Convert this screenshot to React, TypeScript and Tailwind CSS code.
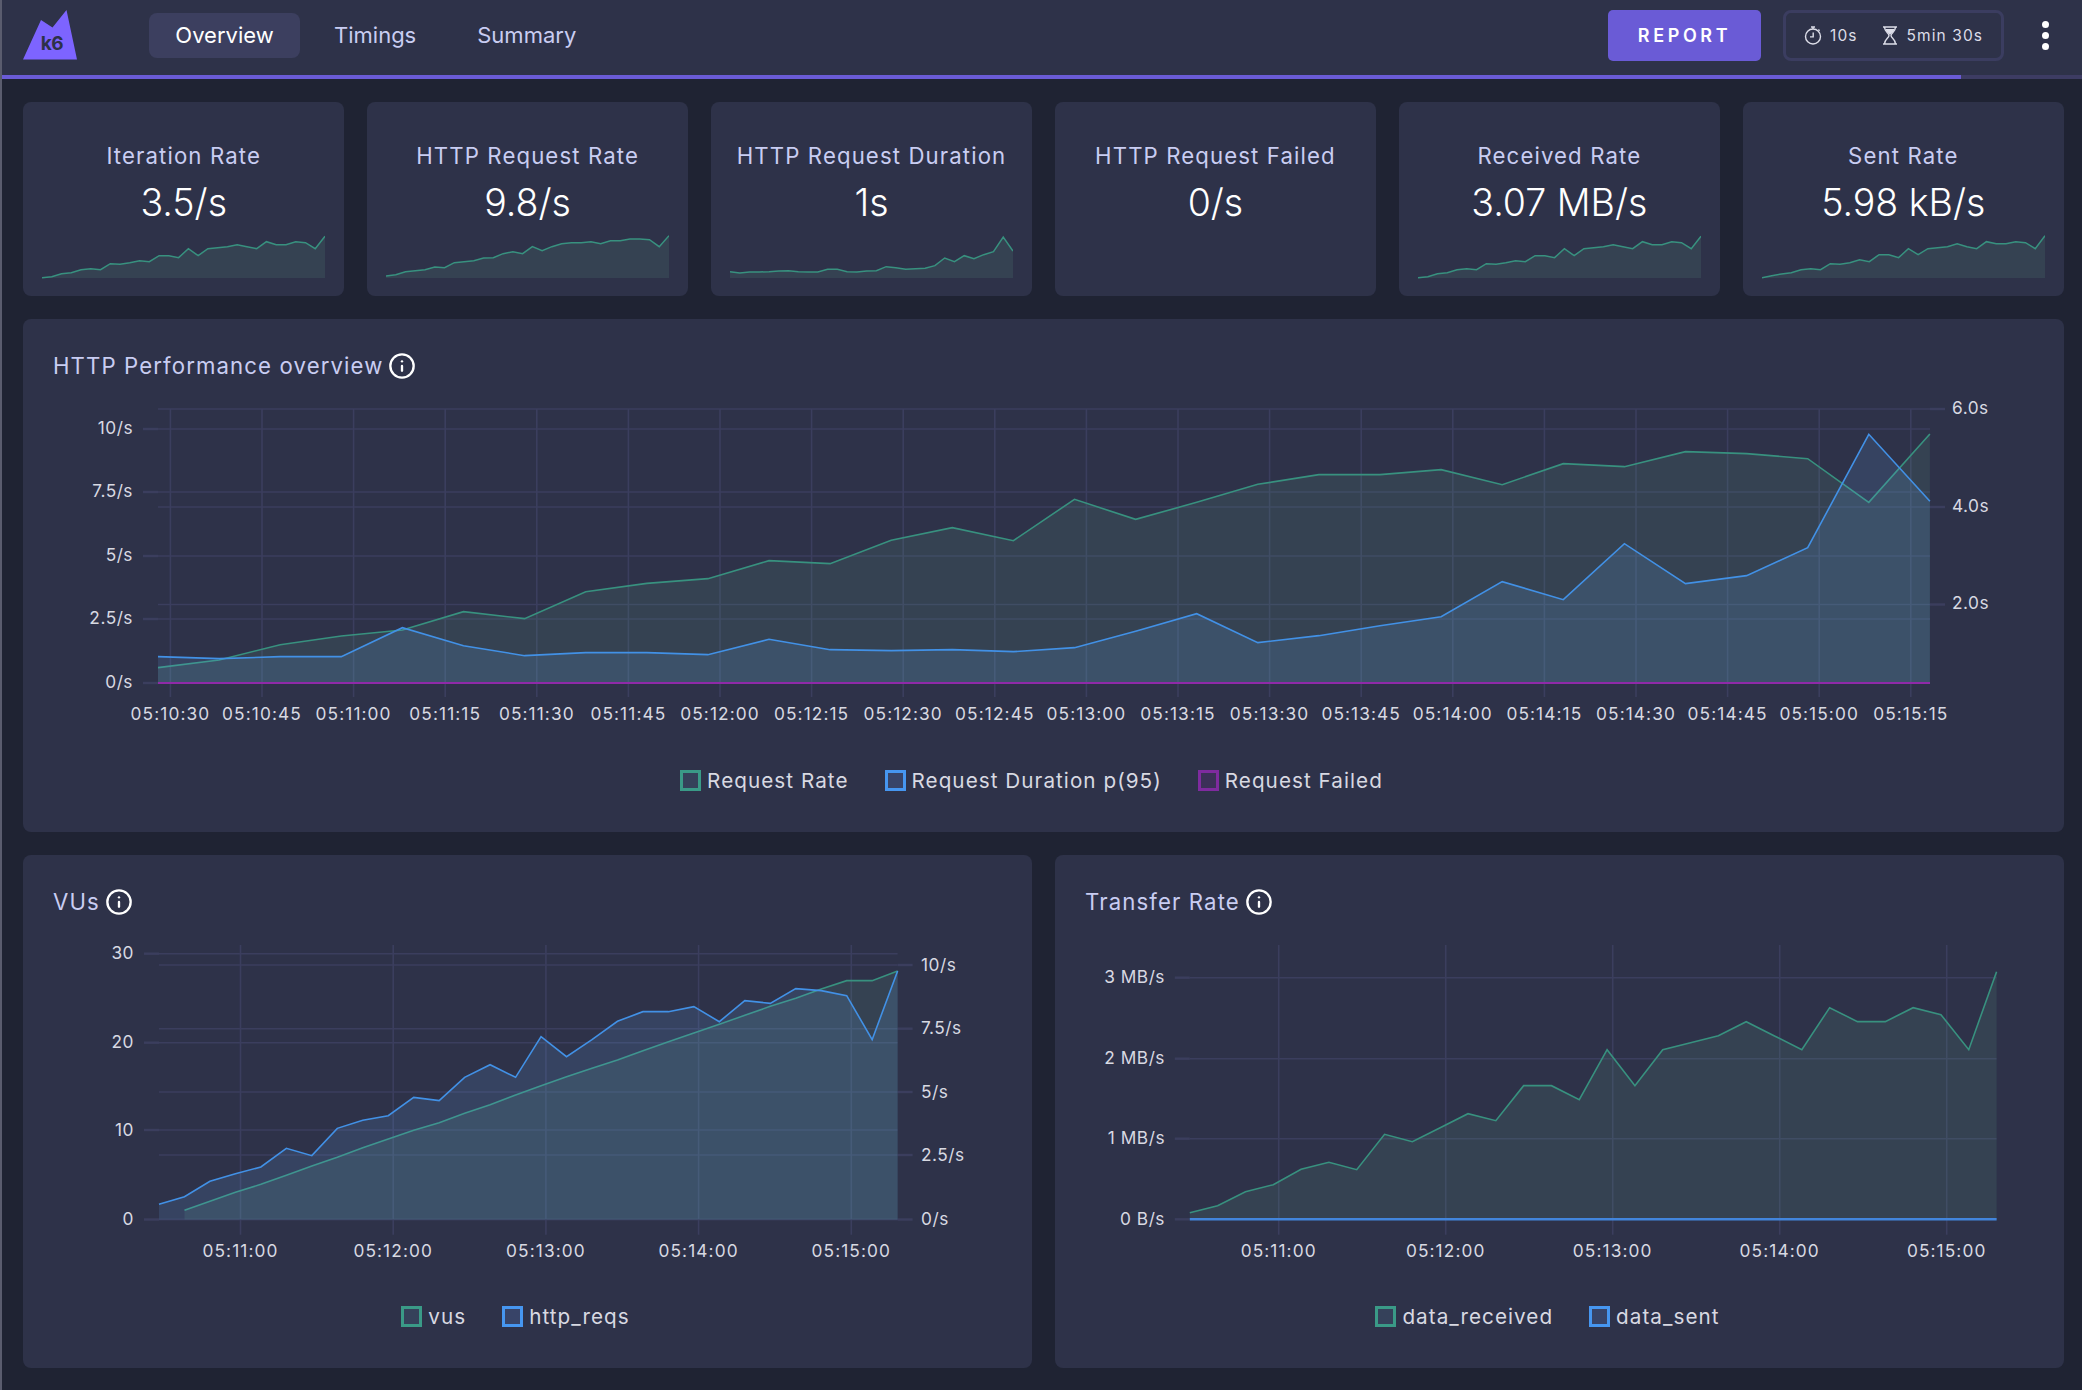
import { Info } from "lucide-react";
import type { ReactNode } from "react";

const GREEN = "#38917f";
const GREEN_FILL = "#68af94";
const BLUE = "#4291e6";
const BLUE_FILL = "#6ab2f9";
const PURPLE = "#8f2aa8";
const GRID = "#3b3e5e";
const LABEL = "#d8d9e2";

const sparkA = [830, 827, 818, 815, 806, 803, 806, 788, 790, 785, 779, 782, 764, 764, 770, 743, 764, 743, 740, 737, 731, 737, 743, 722, 731, 731, 722, 725, 743, 706];
const sparkB = [825, 821, 812, 809, 806, 798, 800, 785, 782, 779, 771, 770, 758, 752, 758, 737, 749, 737, 728, 725, 725, 722, 728, 719, 719, 714, 714, 716, 737, 704];
const sparkC = [812, 816, 813, 813, 812, 810, 809, 812, 813, 813, 805, 805, 812, 813, 810, 809, 797, 800, 805, 803, 802, 794, 771, 782, 764, 773, 761, 752, 708, 750];
const sparkD = [830, 824, 819, 815, 806, 803, 806, 788, 790, 785, 776, 782, 761, 761, 770, 743, 761, 743, 740, 737, 728, 737, 743, 722, 728, 728, 722, 725, 743, 704];

const stats = [
  { title: "Iteration Rate", value: "3.5/s", spark: sparkA },
  { title: "HTTP Request Rate", value: "9.8/s", spark: sparkB },
  { title: "HTTP Request Duration", value: "1s", spark: sparkC },
  { title: "HTTP Request Failed", value: "0/s", spark: null },
  { title: "Received Rate", value: "3.07 MB/s", spark: sparkA },
  { title: "Sent Rate", value: "5.98 kB/s", spark: sparkD },
];

// sample heights measured at 3x, so y = top + v / 3
const perfRate = [803, 780, 734, 708, 690, 635, 656, 575, 550, 536, 482, 491, 421, 383, 422, 298, 358, 307, 253, 224, 224, 209, 254, 191, 200, 155, 161, 176, 307, 102];
const perfDuration = [770, 776, 770, 770, 683, 737, 767, 758, 758, 764, 718, 749, 752, 749, 755, 743, 694, 641, 728, 707, 677, 650, 545, 599, 431, 551, 527, 443, 103, 304];
const vus = [811, 784, 757, 733, 706, 678, 652, 623, 597, 571, 548, 520, 494, 465, 437, 410, 385, 360, 332, 305, 279, 253, 226, 199, 175, 147, 122, 122, 93];
const httpReqs = [793, 770, 724, 701, 681, 625, 647, 565, 541, 527, 472, 482, 412, 374, 412, 290, 350, 299, 244, 215, 215, 200, 245, 182, 190, 146, 152, 167, 299, 93];
const received = [818, 797, 755, 734, 688, 667, 689, 583, 605, 563, 521, 542, 437, 437, 479, 329, 437, 329, 308, 287, 245, 287, 329, 203, 245, 245, 203, 224, 329, 95];

const perfTimes = ["05:10:30", "05:10:45", "05:11:00", "05:11:15", "05:11:30", "05:11:45", "05:12:00", "05:12:15", "05:12:30", "05:12:45", "05:13:00", "05:13:15", "05:13:30", "05:13:45", "05:14:00", "05:14:15", "05:14:30", "05:14:45", "05:15:00", "05:15:15"];
const minuteTimes = ["05:11:00", "05:12:00", "05:13:00", "05:14:00", "05:15:00"];

type AxisLabel = { y: number; text: string };
type Series = { ys: number[]; color: string; fill: string; startX: number; fillOpacity: number; width?: number };

type ChartProps = {
  left: number;
  top: number;
  width: number;
  plotLeft: number;
  plotRight: number;
  baseY: number;
  gridTop: number;
  gridBottom: number;
  leftLabelX: number;
  rightLabelX?: number;
  labelDy?: number;
  leftAxis: AxisLabel[];
  rightAxis?: AxisLabel[];
  xTicks: { x: number; text: string }[];
  labelY: number;
  cropTop: number;
  step: number;
  series: Series[];
  flatLines?: { color: string; width: number }[];
};

function Chart(props: ChartProps) {
  const { left, top, width, plotLeft, plotRight, baseY, gridTop, gridBottom, leftAxis, rightAxis = [], xTicks, series, step, cropTop, labelDy = -1 } = props;
  const hLine = (y: number) => <line key={"h" + y} x1={plotLeft} x2={plotRight} y1={y} y2={y} stroke={GRID} strokeWidth={1.6} />;

  return (
    <svg className="block h-[340px] w-full" viewBox={`${left} ${top} ${width} 340`}>
      {leftAxis.map((a) => hLine(a.y))}
      {rightAxis.map((a) => hLine(a.y))}
      {xTicks.map((t) => (
        <line key={t.text} x1={t.x} x2={t.x} y1={gridTop} y2={gridBottom} stroke={GRID} strokeWidth={1.6} />
      ))}
      {leftAxis.map((a) => (
        <line key={a.text} x1={plotLeft - 15} x2={plotLeft} y1={a.y} y2={a.y} stroke={GRID} strokeWidth={2.4} />
      ))}
      {rightAxis.map((a) => (
        <line key={a.text} x1={plotRight} x2={plotRight + 15} y1={a.y} y2={a.y} stroke={GRID} strokeWidth={2.4} />
      ))}
      {series.map((s) => {
        const pts = s.ys.map((v, i) => `${s.startX + i * step},${cropTop + v / 3}`);
        const lastX = s.startX + (s.ys.length - 1) * step;
        return (
          <g key={s.color}>
            <polygon points={`${s.startX},${baseY} ${pts.join(" ")} ${lastX},${baseY}`} fill={s.fill} fillOpacity={s.fillOpacity} />
            <polyline points={pts.join(" ")} fill="none" stroke={s.color} strokeWidth={s.width ?? 1.6} />
          </g>
        );
      })}
      {props.flatLines?.map((l) => (
        <line key={l.color} x1={plotLeft} x2={plotRight} y1={baseY} y2={baseY} stroke={l.color} strokeWidth={l.width} />
      ))}
      <g fill={LABEL} fontSize={17.3} letterSpacing={0.5} dominantBaseline="central">
        {leftAxis.map((a) => (
          <text key={a.text} x={props.leftLabelX} y={a.y + labelDy} textAnchor="end">
            {a.text}
          </text>
        ))}
        {rightAxis.map((a) => (
          <text key={a.text} x={props.rightLabelX} y={a.y + labelDy}>
            {a.text}
          </text>
        ))}
        {xTicks.map((t) => (
          <text key={t.text} x={t.x} y={props.labelY} textAnchor="middle" letterSpacing={1.1}>
            {t.text}
          </text>
        ))}
      </g>
    </svg>
  );
}

function Logo() {
  return (
    <svg width="54" height="50" viewBox="0 0 54 50" className="mt-[10px] shrink-0 self-start">
      <path d="M0 49.5 18 10l11.5 7.5L43.500 0 54 49.5Z" fill="#7d64ff" />
      <text x="29" y="40" textAnchor="middle" fontSize="19" fontWeight="700" fill="#2d3148" letterSpacing="-0.5">
        k6
      </text>
    </svg>
  );
}

function Header() {
  return (
    <header className="relative flex h-[79px] items-center bg-[#2e3249] pb-[8px] pl-[21px] pr-[33px]">
      <Logo />
      <nav className="ml-[72px] flex gap-[7px] text-[22px] text-[#c9cdf2]">
        <div className="flex h-[45px] w-[151px] items-center justify-center rounded-lg bg-[#3c3f5f] text-white">Overview</div>
        <div className="flex h-[45px] items-center px-[27px]">Timings</div>
        <div className="flex h-[45px] items-center px-[27px]">Summary</div>
      </nav>
      <button className="ml-auto flex h-[51px] w-[153px] items-center justify-center rounded-[5px] bg-[#6a5bd6] text-[18px] font-semibold tracking-[0.2em] text-white">
        REPORT
      </button>
      <div className="ml-[22px] flex h-[51px] w-[221px] items-center rounded-lg border-[3px] border-[#3b3d60] pl-[18px] text-[15.5px] tracking-[0.07em] text-[#dcdde8]">
        <svg width="18" height="19" viewBox="0 0 18 19" fill="none" stroke="#dcdde8" strokeWidth="1.4" className="shrink-0">
          <circle cx="9" cy="10.5" r="7.5" />
          <path d="M9 1.2v1.800M7 1h4M14.400 3.600l1.200 1.200M9.200 6.500v4.400H6" />
        </svg>
        <span className="ml-[8px]">10s</span>
        <svg width="16" height="19" viewBox="0 0 16 19" fill="none" stroke="#dcdde8" strokeWidth="1.4" className="ml-[24px] shrink-0">
          <path d="M1 1h14M1 18h14M2.500 1c0 5 4.500 6 4.500 8.500S2.500 13 2.500 18M13.500 1c0 5-4.500 6-4.500 8.500s4.500 3.500 4.500 8.500" />
          <path d="M3.500 3h9c-.5 3-3.500 4-4.500 6-1-2-4-3-4.500-6Z" fill="#dcdde8" stroke="none" />
        </svg>
        <span className="ml-[9px]">5min 30s</span>
      </div>
      <div className="ml-[38px] flex flex-col gap-[4px]">
        <span className="size-[7px] rounded-full bg-white" />
        <span className="size-[7px] rounded-full bg-white" />
        <span className="size-[7px] rounded-full bg-white" />
      </div>
      <div className="absolute bottom-0 left-0 h-[4px] w-full bg-[#3d3c63]">
        <div className="h-full w-[1959px] bg-[#6a5bd6]" />
      </div>
    </header>
  );
}

function Spark({ data }: { data: number[] }) {
  const pts = data.map((v, i) => `${(i * 283) / 29},${v / 3 - 231}`).join(" ");
  return (
    <svg width="283" height="47" viewBox="0 0 283 47" className="mt-[6px] block">
      <polygon points={`0,46 ${pts} 283,46`} fill={GREEN_FILL} fillOpacity={0.13} />
      <polyline points={pts} fill="none" stroke={GREEN} strokeWidth={1.5} />
    </svg>
  );
}

function StatCard({ title, value, spark }: { title: string; value: string; spark: number[] | null }) {
  return (
    <div className="flex h-[194px] flex-col items-center rounded-lg bg-[#2e3249] pt-[40px]">
      <div className="text-[22.2px] leading-[28px] tracking-[0.05em] text-[#c9cdf2]">{title}</div>
      <div className="mt-[10px] text-[37.5px] font-light leading-[46px] text-white">{value}</div>
      {spark && <Spark data={spark} />}
    </div>
  );
}

function Panel({ title, className, legend, children }: { title: string; className?: string; legend: { name: string; swatch: string }[]; children: ReactNode }) {
  return (
    <section className={"h-[513px] rounded-lg bg-[#2e3249] " + (className ?? "")}>
      <div className="flex h-[76px] items-start gap-[5px] pl-[30px] pt-[35px] text-[22.2px] leading-[24px] tracking-[0.05em] text-[#c9cdf2]">
        {title}
        <Info size={28} strokeWidth={2} className="-mt-[2px] text-white" />
      </div>
      {children}
      <div className="mt-[35px] flex justify-center gap-[36px] pr-[24px] text-[20.7px] leading-[21px] tracking-[0.05em] text-[#d8d9e2]">
        {legend.map((l) => (
          <div key={l.name} className="flex items-center gap-[6px]">
            <span className={"size-[21px] border-[3px] " + l.swatch} />
            {l.name}
          </div>
        ))}
      </div>
    </section>
  );
}

const greenSwatch = "border-[#3a9a87] bg-[#35415a]";
const blueSwatch = "border-[#4696f0] bg-[#384468]";
const purpleSwatch = "border-[#7f2b9f] bg-[#3c3058]";

export default function App() {
  return (
    <div className="min-h-[1390px] border-l-2 border-[#5a5c6e] bg-[#1f2333] font-['Inter',sans-serif]">
      <Header />
      <main className="flex flex-col gap-[23px] pb-[21px] pl-[21px] pr-[18px] pt-[23px]">
        <div className="grid grid-cols-6 gap-[22.5px]">
          {stats.map((s) => (
            <StatCard key={s.title} {...s} />
          ))}
        </div>
        <Panel
          title="HTTP Performance overview"
          legend={[
            { name: "Request Rate", swatch: greenSwatch },
            { name: "Request Duration p(95)", swatch: blueSwatch },
            { name: "Request Failed", swatch: purpleSwatch },
          ]}
        >
          <Chart
            left={23}
            top={395}
            width={2041}
            plotLeft={158}
            plotRight={1930}
            baseY={683}
            gridTop={409}
            gridBottom={697}
            leftLabelX={133}
            rightLabelX={1952}
            labelDy={-2}
            leftAxis={[
              { y: 429, text: "10/s" },
              { y: 492, text: "7.5/s" },
              { y: 556, text: "5/s" },
              { y: 619, text: "2.5/s" },
              { y: 683, text: "0/s" },
            ]}
            rightAxis={[
              { y: 409, text: "6.0s" },
              { y: 507, text: "4.0s" },
              { y: 604.5, text: "2.0s" },
            ]}
            xTicks={perfTimes.map((text, i) => ({ text, x: 170.4 + i * 91.6 }))}
            labelY={713}
            cropTop={400}
            step={61.1}
            series={[
              { ys: perfRate, color: GREEN, fill: GREEN_FILL, startX: 158, fillOpacity: 0.13 },
              { ys: perfDuration, color: BLUE, fill: BLUE_FILL, startX: 158, fillOpacity: 0.14 },
            ]}
            flatLines={[{ color: PURPLE, width: 2 }]}
          />
        </Panel>
        <div className="flex gap-[23px]">
          <Panel
            title="VUs"
            className="flex-1"
            legend={[
              { name: "vus", swatch: greenSwatch },
              { name: "http_reqs", swatch: blueSwatch },
            ]}
          >
            <Chart
              left={23}
              top={931}
              width={1009}
              plotLeft={159}
              plotRight={897.6}
              baseY={1219.5}
              gridTop={945}
              gridBottom={1234.7}
              leftLabelX={134}
              rightLabelX={921}
              leftAxis={[
                { y: 953.7, text: "30" },
                { y: 1042.7, text: "20" },
                { y: 1130, text: "10" },
                { y: 1219.5, text: "0" },
              ]}
              rightAxis={[
                { y: 965, text: "10/s" },
                { y: 1028.7, text: "7.5/s" },
                { y: 1092, text: "5/s" },
                { y: 1155, text: "2.5/s" },
                { y: 1219.5, text: "0/s" },
              ]}
              xTicks={minuteTimes.map((text, i) => ({ text, x: 240.5 + i * 152.7 }))}
              labelY={1250.5}
              cropTop={940}
              step={25.47}
              series={[
                { ys: vus, color: GREEN, fill: GREEN_FILL, startX: 184.5, fillOpacity: 0.13 },
                { ys: httpReqs, color: BLUE, fill: BLUE_FILL, startX: 159, fillOpacity: 0.14 },
              ]}
            />
          </Panel>
          <Panel
            title="Transfer Rate"
            className="flex-1"
            legend={[
              { name: "data_received", swatch: greenSwatch },
              { name: "data_sent", swatch: blueSwatch },
            ]}
          >
            <Chart
              left={1055}
              top={931}
              width={1009}
              plotLeft={1189.8}
              plotRight={1996.6}
              baseY={1219.3}
              gridTop={945}
              gridBottom={1234.7}
              leftLabelX={1165}
              leftAxis={[
                { y: 977.7, text: "3 MB/s" },
                { y: 1058.7, text: "2 MB/s" },
                { y: 1138.7, text: "1 MB/s" },
                { y: 1219.3, text: "0 B/s" },
              ]}
              xTicks={minuteTimes.map((text, i) => ({ text, x: 1278.7 + i * 167 }))}
              labelY={1250.5}
              cropTop={940}
              step={27.82}
              series={[{ ys: received, color: GREEN, fill: GREEN_FILL, startX: 1189.8, fillOpacity: 0.13 }]}
              flatLines={[{ color: "#4285dc", width: 2.4 }]}
            />
          </Panel>
        </div>
      </main>
    </div>
  );
}
